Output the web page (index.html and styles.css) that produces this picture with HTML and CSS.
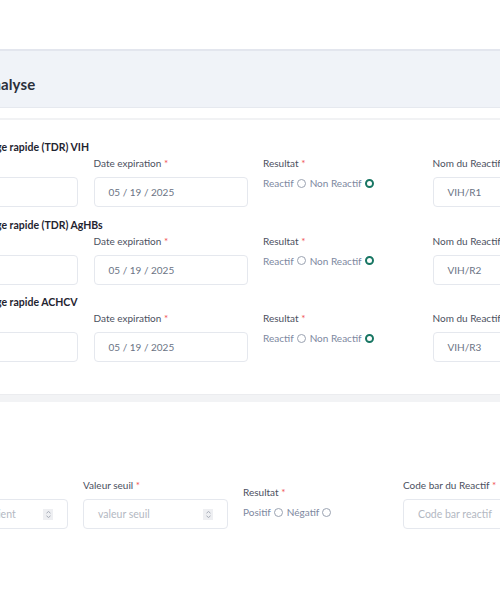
FILE: index.html
```html
<!DOCTYPE html>
<html lang="fr">
<head>
<meta charset="utf-8">
<title>Analyse</title>
<link rel="stylesheet" href="styles.css">
</head>
<body>
<div class="page">
  <div class="topbar"></div>
  <section class="card">
    <header class="card-head"><h2 class="card-title">Analyse</h2></header>
    <div class="card-rule"></div>
    <div class="card-body">
      <div class="test">
        <h3 class="test-title">Dépistage rapide (TDR) VIH</h3>
        <div class="grid4">
          <div class="field"><label class="lbl lbl-empty">&nbsp;</label><div class="input"></div></div>
          <div class="field"><label class="lbl">Date expiration <span class="req">*</span></label><div class="input"><span class="val">05 / 19 / 2025</span></div></div>
          <div class="field"><label class="lbl">Resultat <span class="req">*</span></label>
            <div class="radios"><span>Reactif</span><span class="radio"></span><span>Non Reactif</span><span class="radio on"></span></div></div>
          <div class="field"><label class="lbl">Nom du Reactif <span class="req">*</span></label><div class="input"><span class="val">VIH/R1</span></div></div>
        </div>
      </div>
      <div class="test">
        <h3 class="test-title">Dépistage rapide (TDR) AgHBs</h3>
        <div class="grid4">
          <div class="field"><label class="lbl lbl-empty">&nbsp;</label><div class="input"></div></div>
          <div class="field"><label class="lbl">Date expiration <span class="req">*</span></label><div class="input"><span class="val">05 / 19 / 2025</span></div></div>
          <div class="field"><label class="lbl">Resultat <span class="req">*</span></label>
            <div class="radios"><span>Reactif</span><span class="radio"></span><span>Non Reactif</span><span class="radio on"></span></div></div>
          <div class="field"><label class="lbl">Nom du Reactif <span class="req">*</span></label><div class="input"><span class="val">VIH/R2</span></div></div>
        </div>
      </div>
      <div class="test">
        <h3 class="test-title">Dépistage rapide ACHCV</h3>
        <div class="grid4">
          <div class="field"><label class="lbl lbl-empty">&nbsp;</label><div class="input"></div></div>
          <div class="field"><label class="lbl">Date expiration <span class="req">*</span></label><div class="input"><span class="val">05 / 19 / 2025</span></div></div>
          <div class="field"><label class="lbl">Resultat <span class="req">*</span></label>
            <div class="radios"><span>Reactif</span><span class="radio"></span><span>Non Reactif</span><span class="radio on"></span></div></div>
          <div class="field"><label class="lbl">Nom du Reactif <span class="req">*</span></label><div class="input"><span class="val">VIH/R3</span></div></div>
        </div>
      </div>
    </div>
  </section>
  <div class="gap"></div>
  <section class="card card2">
    <div class="grid5">
      <div class="field"><label class="lbl">Valeur patient <span class="req">*</span></label>
        <div class="input num"><span class="ph">valeur du patient</span><span class="spin"><svg width="7" height="9" viewBox="0 0 7 9"><path d="M1.5 3.2 L3.5 1.5 L5.5 3.2 M1.5 5.8 L3.5 7.5 L5.5 5.8" fill="none" stroke="#9ca3af" stroke-width="0.9"/></svg></span></div></div>
      <div class="field"><label class="lbl">Valeur seuil <span class="req">*</span></label>
        <div class="input num"><span class="ph">valeur seuil</span><span class="spin"><svg width="7" height="9" viewBox="0 0 7 9"><path d="M1.5 3.2 L3.5 1.5 L5.5 3.2 M1.5 5.8 L3.5 7.5 L5.5 5.8" fill="none" stroke="#9ca3af" stroke-width="0.9"/></svg></span></div></div>
      <div class="field field-res"><label class="lbl">Resultat <span class="req">*</span></label>
        <div class="radios"><span>Positif</span><span class="radio"></span><span>Négatif</span><span class="radio"></span></div></div>
      <div class="field"><label class="lbl">Code bar du Reactif <span class="req">*</span></label>
        <div class="input"><span class="ph">Code bar reactif</span></div></div>
    </div>
  </section>
</div>
</body>
</html>
```

FILE: styles.css
```css
html, body {
  margin: 0;
  padding: 0;
  background: #ffffff;
  overflow: hidden;
  width: 500px;
  height: 600px;
}
body {
  font-family: Lato, "Liberation Sans", sans-serif;
  color: #374151;
}
.page {
  width: 900px;
  margin-left: -100px;
}
.topbar {
  height: 49px;
  background: #ffffff;
}
.card {
  background: #ffffff;
}
.card-head {
  height: 57px;
  box-sizing: border-box;
  height: 59px;
  background: #f0f3f8;
  border-top: 2px solid #e3e6ee;
  border-bottom: 1px solid #e6e9ef;
  display: flex;
  align-items: center;
  padding: 10px 0 0 82px;
}
.card-title {
  margin: 0;
  font-size: 15px;
  font-weight: 700;
  color: #2b303b;
  letter-spacing: 0.1px;
}
.card-rule {
  height: 2px;
  margin-top: 10px;
  background: #f1f2f4;
}
.card-body {
  padding: 20px 24px 32px 24px;
}
.test {
  margin-bottom: 10.5px;
}
.test:last-child {
  margin-bottom: 0;
}
.test-title {
  margin: 0 0 2px 0;
  padding-left: 36px;
  font-size: 10.5px;
  line-height: 14px;
  font-weight: 700;
  color: #1f2430;
}
.grid4 {
  display: grid;
  grid-template-columns: repeat(4, 154px);
  column-gap: 15.5px;
}
.field {
  display: flex;
  flex-direction: column;
}
.lbl {
  font-size: 10px;
  line-height: 14px;
  color: #4b5060;
  margin-bottom: 7px;
}
.req {
  color: #f05252;
}
.input {
  height: 28px;
  border: 1px solid #e5e8ee;
  border-radius: 4px;
  display: flex;
  align-items: center;
  padding: 0 13px 0 14px;
  background: #ffffff;
}
.val {
  font-size: 10px;
  color: #6b7384;
}
.ph {
  font-size: 10.5px;
  color: #b3b8c2;
  flex: 1;
}
.radios {
  display: flex;
  align-items: center;
  gap: 3px;
  font-size: 10px;
  line-height: 12px;
  color: #7d88a0;
}
.radio {
  width: 7px;
  height: 7px;
  border: 1px solid #9aa2b1;
  border-radius: 50%;
  display: inline-block;
  margin-right: 1px;
}
.radio.on {
  width: 5px;
  height: 5px;
  border: 2px solid #187663;
}
.gap {
  height: 7px;
  background: #f2f3f5;
  border-top: 1px solid #ebecef;
}
.card2 {
  padding: 76px 24px 60px 23px;
}
.grid5 {
  display: grid;
  grid-template-columns: repeat(4, 145px);
  column-gap: 15px;
}
.field-res {
  padding-top: 7px;
}
.spin {
  width: 10px;
  height: 11px;
  background: #eeeff2;
  display: flex;
  align-items: center;
  justify-content: center;
  margin-right: 1px;
}
```
